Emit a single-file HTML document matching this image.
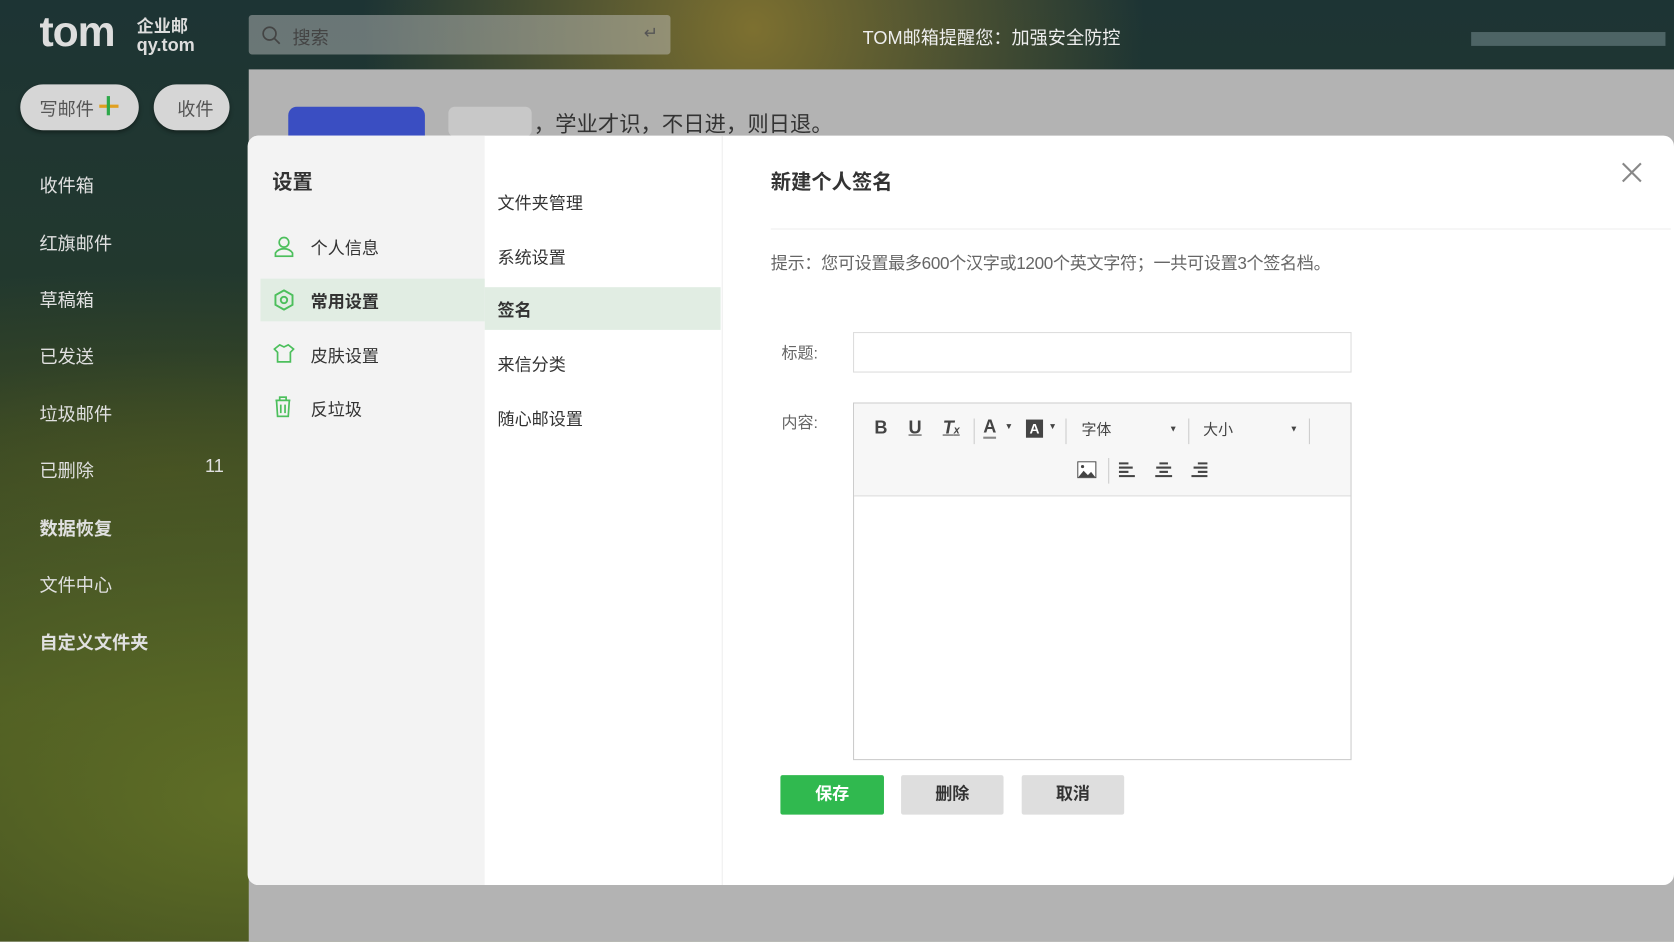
<!DOCTYPE html>
<html><head><meta charset="utf-8">
<style>
*{margin:0;padding:0;box-sizing:border-box}
html,body{width:1674px;height:942px;overflow:hidden;font-family:"Liberation Sans","Noto Sans CJK SC",sans-serif}
#w{position:absolute;left:0;top:0;width:1568px;height:882px;transform:scale(1.06760);transform-origin:0 0;
background:radial-gradient(ellipse at 15% 85%,#5f6e26 0%,transparent 40%),radial-gradient(ellipse at 45% 3%,#7d7030 0%,transparent 30%),radial-gradient(ellipse at 10% 50%,#3f4a22 0%,transparent 30%),linear-gradient(180deg,#1d3434 0%,#243a2c 40%,#3e4c22 75%,#2c361c 100%)}
.a{position:absolute;white-space:nowrap}
.side{color:#e0e0e0;font-size:17px;left:37px}
.m1{font-size:16px;color:#333}
</style></head><body><div id="w">
<div class="a" style="left:37px;top:8px;font-size:40px;font-weight:bold;color:#ddd;letter-spacing:-1px">tom</div>
<div class="a" style="left:128px;top:11px;font-size:16px;font-weight:bold;color:#ddd">企业邮</div>
<div class="a" style="left:128px;top:33px;font-size:17px;font-weight:bold;color:#ddd">qy.tom</div>
<div class="a" style="left:233px;top:14px;width:395px;height:37px;background:rgba(200,200,200,.45);border-radius:3px"></div>
<svg class="a" style="left:245px;top:24px" width="18" height="18"><circle cx="7.5" cy="7.5" r="6" fill="none" stroke="#444" stroke-width="1.6"/><path d="M12 12l5 5" stroke="#444" stroke-width="1.6"/></svg>
<div class="a" style="left:274px;top:21px;font-size:17px;color:#444">搜索</div>
<div class="a" style="left:603px;top:21px;font-size:16px;color:#555">↵</div>
<div class="a" style="left:808px;top:21px;font-size:17px;color:#eee">TOM邮箱提醒您：加强安全防控</div>
<div class="a" style="left:1378px;top:30px;width:182px;height:13px;background:#4d6465"></div>
<div class="a" style="left:19px;top:79px;width:111px;height:43px;background:#d6d6d6;border-radius:22px;box-shadow:0 2px 4px rgba(0,0,0,.4)"></div>
<div class="a" style="left:37px;top:88px;font-size:17px;color:#555">写邮件</div>
<div class="a" style="left:93px;top:98px;width:18px;height:3px;background:#e0a020"></div>
<div class="a" style="left:100px;top:90px;width:3px;height:18px;background:#2ea84a"></div>
<div class="a" style="left:144px;top:79px;width:71px;height:43px;background:#d6d6d6;border-radius:22px;box-shadow:0 2px 4px rgba(0,0,0,.4)"></div>
<div class="a" style="left:166px;top:88px;font-size:17px;color:#555">收件</div>
<div class="a side" style="top:160px">收件箱</div>
<div class="a side" style="top:214px">红旗邮件</div>
<div class="a side" style="top:267px">草稿箱</div>
<div class="a side" style="top:320px">已发送</div>
<div class="a side" style="top:374px">垃圾邮件</div>
<div class="a side" style="top:427px">已删除</div>
<div class="a side" style="top:427px;left:192px">11</div>
<div class="a side" style="top:481px;font-weight:bold">数据恢复</div>
<div class="a side" style="top:534px">文件中心</div>
<div class="a side" style="top:588px;font-weight:bold">自定义文件夹</div>
<div class="a" style="left:233px;top:65px;width:1335px;height:817px;background:#b3b3b3"></div>
<div class="a" style="left:270px;top:100px;width:128px;height:40px;background:#3a4ec2;border-radius:8px"></div>
<div class="a" style="left:420px;top:100px;width:78px;height:28px;background:#c8c8c8;border-radius:6px"></div>
<div class="a" style="left:500px;top:100px;font-size:20px;color:#333">，学业才识，不日进，则日退。</div>
<div class="a" style="left:232px;top:127px;width:1336px;height:702px;background:#fff;border-radius:10px;overflow:hidden">
 <div class="a" style="left:0;top:0;width:222px;height:702px;background:#f3f3f3"></div>
 <div class="a" style="left:444px;top:0;width:1px;height:702px;background:#eee"></div>
</div>
<div class="a" style="left:255px;top:156px;font-size:19px;font-weight:bold;color:#333">设置</div>
<div class="a" style="left:244px;top:261px;width:210px;height:40px;background:#e1ede3"></div>
<svg class="a" style="left:256px;top:221px" width="20" height="20" fill="none" stroke="#4cbf5c" stroke-width="1.6"><circle cx="10" cy="6" r="4.5"/><path d="M2 19v-3c2-3 5-4 8-4s6 1 8 4v3z"/></svg>
<svg class="a" style="left:256px;top:271px" width="20" height="20" fill="none" stroke="#4cbf5c" stroke-width="1.8"><path d="M10 1l8 4.5v9L10 19l-8-4.5v-9z"/><circle cx="10" cy="10" r="3"/></svg>
<svg class="a" style="left:256px;top:321px" width="20" height="20" fill="none" stroke="#4cbf5c" stroke-width="1.6"><path d="M6 2l4 2 4-2 5 4-3 3v9H4V9L1 6z"/></svg>
<svg class="a" style="left:256px;top:371px" width="18" height="20" fill="none" stroke="#4cbf5c" stroke-width="1.6"><path d="M2 4h14M6 4V1h6v3M3 4l1 15h10l1-15M7 8v8M11 8v8"/></svg>
<div class="a m1" style="left:291px;top:219px">个人信息</div>
<div class="a m1" style="left:291px;top:269px;font-weight:bold">常用设置</div>
<div class="a m1" style="left:291px;top:320px">皮肤设置</div>
<div class="a m1" style="left:291px;top:370px">反垃圾</div>
<div class="a" style="left:454px;top:269px;width:221px;height:40px;background:#e1ede3"></div>
<div class="a m1" style="left:466px;top:177px">文件夹管理</div>
<div class="a m1" style="left:466px;top:228px">系统设置</div>
<div class="a m1" style="left:466px;top:277px;font-weight:bold">签名</div>
<div class="a m1" style="left:466px;top:328px">来信分类</div>
<div class="a m1" style="left:466px;top:379px">随心邮设置</div>
<div class="a" style="left:722px;top:156px;font-size:19px;font-weight:bold;color:#333">新建个人签名</div>
<svg class="a" style="left:1519px;top:152px" width="19" height="19" stroke="#888" stroke-width="2"><path d="M1 1l17 17M18 1L1 18"/></svg>
<div class="a" style="left:722px;top:214px;width:843px;height:1px;background:#eee"></div>
<div class="a" style="left:722px;top:233px;font-size:16px;color:#666;letter-spacing:-0.3px">提示：您可设置最多600个汉字或1200个英文字符；一共可设置3个签名档。</div>
<div class="a" style="left:732px;top:320px;font-size:15px;color:#666">标题:</div>
<div class="a" style="left:799px;top:311px;width:467px;height:38px;border:1px solid #ddd"></div>
<div class="a" style="left:732px;top:385px;font-size:15px;color:#666">内容:</div>
<div class="a" style="left:799px;top:377px;width:467px;height:335px;border:1px solid #ccc"></div>
<div class="a" style="left:800px;top:378px;width:465px;height:87px;background:#f7f7f7;border-bottom:1px solid #ddd"></div>
<div class="a" style="left:819px;top:391px;font-size:17px;font-weight:bold;color:#444">B</div>
<div class="a" style="left:851px;top:391px;font-size:17px;font-weight:bold;color:#444;text-decoration:underline">U</div>
<div class="a" style="left:883px;top:391px;font-size:17px;font-weight:bold;font-style:italic;color:#444;text-decoration:underline">T<span style="font-size:10px">x</span></div>
<div class="a" style="left:912px;top:392px;width:1px;height:24px;background:#ccc"></div>
<div class="a" style="left:921px;top:391px;font-size:17px;font-weight:bold;color:#444;border-bottom:2px solid #888;line-height:18px">A</div>
<div class="a" style="left:941px;top:395px;font-size:8px;color:#444">▼</div>
<div class="a" style="left:961px;top:393px;width:16px;height:17px;background:#444;color:#fff;font-size:13px;font-weight:bold;text-align:center;line-height:17px">A</div>
<div class="a" style="left:982px;top:395px;font-size:8px;color:#444">▼</div>
<div class="a" style="left:998px;top:392px;width:1px;height:24px;background:#ccc"></div>
<div class="a" style="left:1013px;top:392px;font-size:14px;color:#444">字体</div>
<div class="a" style="left:1095px;top:397px;font-size:8px;color:#444">▼</div>
<div class="a" style="left:1113px;top:392px;width:1px;height:24px;background:#ccc"></div>
<div class="a" style="left:1127px;top:392px;font-size:14px;color:#444">大小</div>
<div class="a" style="left:1208px;top:397px;font-size:8px;color:#444">▼</div>
<div class="a" style="left:1226px;top:392px;width:1px;height:24px;background:#ccc"></div>
<svg class="a" style="left:1009px;top:432px" width="18" height="16"><rect x="0.5" y="0.5" width="17" height="15" fill="#fff" stroke="#444"/><path d="M1 15l5-6 4 4 3-3 4 5z" fill="#444"/><circle cx="5" cy="5" r="1.5" fill="#444"/></svg>
<div class="a" style="left:1038px;top:429px;width:1px;height:24px;background:#ccc"></div>
<svg class="a" style="left:1048px;top:433px" width="16" height="14" fill="#444"><rect y="0" width="9" height="2"/><rect y="4" width="13" height="2"/><rect y="8" width="9" height="2"/><rect y="12" width="15" height="2"/></svg>
<svg class="a" style="left:1082px;top:433px" width="16" height="14" fill="#444"><rect x="4" y="0" width="8" height="2"/><rect x="1" y="4" width="14" height="2"/><rect x="4" y="8" width="8" height="2"/><rect x="0" y="12" width="16" height="2"/></svg>
<svg class="a" style="left:1115px;top:433px" width="16" height="14" fill="#444"><rect x="7" y="0" width="9" height="2"/><rect x="3" y="4" width="13" height="2"/><rect x="7" y="8" width="9" height="2"/><rect x="1" y="12" width="15" height="2"/></svg>
<div class="a" style="left:731px;top:726px;width:97px;height:37px;background:#30b94f;border-radius:2px;color:#fff;font-weight:bold;font-size:16px;text-align:center;line-height:37px">保存</div>
<div class="a" style="left:844px;top:726px;width:96px;height:37px;background:#dedede;border-radius:2px;color:#333;font-weight:bold;font-size:16px;text-align:center;line-height:37px">删除</div>
<div class="a" style="left:957px;top:726px;width:96px;height:37px;background:#dedede;border-radius:2px;color:#333;font-weight:bold;font-size:16px;text-align:center;line-height:37px">取消</div>
</div></body></html>
